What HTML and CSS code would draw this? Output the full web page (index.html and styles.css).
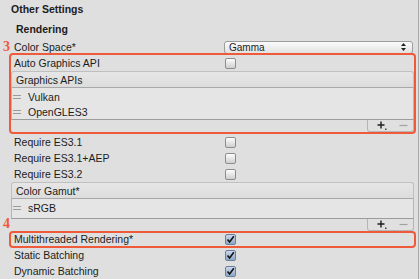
FILE: index.html
```html
<!DOCTYPE html>
<html>
<head>
<meta charset="utf-8">
<link rel="stylesheet" href="styles.css">
</head>
<body>
<div class="panel">
  <div class="title">Other Settings</div>
  <div class="section">Rendering</div>
  <div class="row">
    <span class="mark mark-3">3</span>
    <span class="label">Color Space*</span>
    <div class="dropdown"><span>Gamma</span>
      <svg class="arrows" width="5" height="8" viewBox="0 0 5 8"><path d="M2.5 0 L5 3 L0 3 Z M0 5 L5 5 L2.5 8 Z" fill="#222"/></svg>
    </div>
  </div>
  <div class="group annot annot-1">
    <div class="row row-auto">
      <span class="label">Auto Graphics API</span>
      <span class="cb"></span>
    </div>
    <div class="rlist">
      <div class="rl-head">Graphics APIs</div>
      <div class="rl-body body-1">
        <div class="rl-item"><span class="handle"></span>Vulkan</div>
        <div class="rl-item"><span class="handle"></span>OpenGLES3</div>
      </div>
      <div class="rl-foot">
        <div class="tab">
          <svg width="10" height="9" viewBox="0 0 10 9"><path d="M4 0.5 V7.5 M0.5 4 H7.5" stroke="#1e1e1e" stroke-width="1.4"/><rect x="8" y="7.5" width="1.5" height="1.5" fill="#444"/></svg>
          <svg width="9" height="9" viewBox="0 0 9 9"><path d="M0.5 4.5 H8.5" stroke="#a2a2a2" stroke-width="1.2"/></svg>
        </div>
      </div>
    </div>
  </div>
  <div class="row first-after">
    <span class="label">Require ES3.1</span>
    <span class="cb"></span>
  </div>
  <div class="row">
    <span class="label">Require ES3.1+AEP</span>
    <span class="cb"></span>
  </div>
  <div class="row">
    <span class="label">Require ES3.2</span>
    <span class="cb"></span>
  </div>
  <div class="rlist">
    <div class="rl-head">Color Gamut*</div>
    <div class="rl-body body-2">
      <div class="rl-item"><span class="handle"></span>sRGB</div>
    </div>
    <div class="rl-foot">
      <div class="tab">
        <svg width="10" height="9" viewBox="0 0 10 9"><path d="M4 0.5 V7.5 M0.5 4 H7.5" stroke="#1e1e1e" stroke-width="1.4"/><rect x="8" y="7.5" width="1.5" height="1.5" fill="#444"/></svg>
        <svg width="9" height="9" viewBox="0 0 9 9"><path d="M0.5 4.5 H8.5" stroke="#a2a2a2" stroke-width="1.2"/></svg>
      </div>
    </div>
  </div>
  <div class="row annot annot-2">
    <span class="mark mark-4">4</span>
    <span class="label">Multithreaded Rendering*</span>
    <span class="cb checked"><svg width="9" height="9" viewBox="0 0 9 9"><path d="M1.5 4.5 L3.6 7 L7.8 1.2" stroke="#111" stroke-width="1.6" fill="none"/></svg></span>
  </div>
  <div class="row">
    <span class="label">Static Batching</span>
    <span class="cb checked"><svg width="9" height="9" viewBox="0 0 9 9"><path d="M1.5 4.5 L3.6 7 L7.8 1.2" stroke="#111" stroke-width="1.6" fill="none"/></svg></span>
  </div>
  <div class="row">
    <span class="label">Dynamic Batching</span>
    <span class="cb checked"><svg width="9" height="9" viewBox="0 0 9 9"><path d="M1.5 4.5 L3.6 7 L7.8 1.2" stroke="#111" stroke-width="1.6" fill="none"/></svg></span>
  </div>
</div>
</body>
</html>
```
FILE: styles.css
```css
html, body {
  margin: 0;
  background: #e4e4e4;
}
body {
  font-family: "Liberation Sans", Arial, sans-serif;
  font-size: 10.5px;
  color: #1c1c1c;
}
.panel {
  width: 419px;
  height: 279px;
  box-sizing: border-box;
  border-right: 1px solid #a9a9a9;
  background: #dfdfdf;
  overflow: hidden;
}
.title {
  height: 19px;
  line-height: 19px;
  padding-left: 11px;
  font-weight: bold;
}
.section {
  height: 20px;
  line-height: 20px;
  padding-left: 16px;
  font-weight: bold;
}
.row {
  position: relative;
  display: grid;
  grid-template-columns: 211px 1fr;
  align-items: center;
  height: 16px;
  padding-left: 14px;
}
.row .label {
  line-height: 16px;
  white-space: nowrap;
}
.first-after {
  margin-top: 2px;
}
.dropdown {
  justify-self: start;
  margin-left: -1px;
  width: 189px;
  height: 13px;
  box-sizing: border-box;
  border: 1px solid #9d9d9d;
  border-radius: 3px;
  background: linear-gradient(#fbfbfb, #e2e2e2);
  display: flex;
  align-items: center;
  justify-content: space-between;
  padding: 0 6px 0 4px;
  font-size: 10px;
}
.arrows {
  display: block;
}
.cb {
  justify-self: start;
  width: 11px;
  height: 11px;
  box-sizing: border-box;
  border: 1px solid #8d8d8d;
  border-radius: 2px;
  background: linear-gradient(#fdfdfd, #cfcfcf);
  display: flex;
  align-items: center;
  justify-content: center;
}
.cb.checked {
  border-color: #6b7d97;
  background: linear-gradient(#c9d8ec, #8ea6c9);
}
.cb svg {
  display: block;
}
.group {
  position: relative;
}
.annot::after {
  content: "";
  position: absolute;
  left: 9px;
  right: 2px;
  border: 2px solid #ef5a3b;
  border-radius: 4px;
  pointer-events: none;
}
.annot-1::after {
  top: -2px;
  bottom: -2px;
}
.annot-2::after {
  top: 0;
  bottom: -1px;
}
.mark {
  position: absolute;
  left: 3px;
  font-family: "Liberation Serif", "Times New Roman", serif;
  font-weight: bold;
  font-size: 14px;
  line-height: 14px;
  color: #ef5a3b;
}
.mark-3 {
  top: 1px;
}
.mark-4 {
  top: -14px;
}
.rlist {
  margin: 0 4px 0 11px;
}
.rl-head {
  height: 17px;
  box-sizing: border-box;
  border: 1px solid #c0c0c0;
  border-bottom-color: #a8a8a8;
  border-radius: 3px 3px 0 0;
  background: linear-gradient(#e6e6e6, #dcdcdc);
  padding-left: 4px;
  line-height: 16px;
}
.rl-body {
  box-sizing: border-box;
  border: 1px solid #b5b5b5;
  border-top: none;
  border-bottom-color: #9c9c9c;
  background: #e5e5e5;
  padding-top: 1px;
}
.body-1 {
  height: 32px;
  padding-top: 1.5px;
}
.body-2 {
  height: 20px;
}
.rl-item {
  height: 15px;
  display: flex;
  align-items: center;
  padding-left: 1px;
}
.handle {
  width: 8px;
  height: 2px;
  border-top: 1px solid #9b9b9b;
  border-bottom: 1px solid #9b9b9b;
  margin-right: 7px;
}
.rl-foot {
  height: 12px;
  display: flex;
  justify-content: flex-end;
}
.tab {
  width: 47px;
  height: 12px;
  box-sizing: border-box;
  border: 1px solid #b5b5b5;
  border-top: none;
  border-radius: 0 0 3px 3px;
  background: #e0e0e0;
  display: flex;
  align-items: center;
  padding-left: 9px;
  gap: 12px;
}
.tab svg {
  display: block;
}
```
